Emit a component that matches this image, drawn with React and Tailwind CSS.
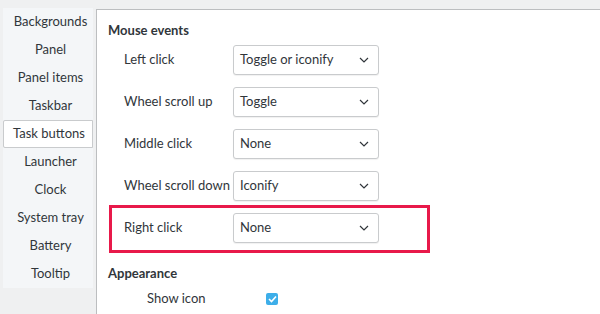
import React from "react";

const TABS = [
    "Backgrounds",
    "Panel",
    "Panel items",
    "Taskbar",
    "Task buttons",
    "Launcher",
    "Clock",
    "System tray",
    "Battery",
    "Tooltip",
];

const EVENTS = [
    { label: "Left click", value: "Toggle or iconify" },
    { label: "Wheel scroll up", value: "Toggle" },
    { label: "Middle click", value: "None" },
    { label: "Wheel scroll down", value: "Iconify" },
    { label: "Right click", value: "None" },
];

const Chevron = () => (
    <svg width="10" height="6" viewBox="0 0 10 6" fill="none">
        <path d="M1 1l4 4 4-4" stroke="#31363b" strokeWidth="1.2" />
    </svg>
);

// Desplegable estilo Breeze
const Select = ({ value }) => (
    <div className="w-[146px] h-[30px] flex items-center justify-between pl-[6px] pr-[9px] bg-white border border-[#c9cbcd] rounded-[3px] shadow-[0_1px_1px_rgba(0,0,0,0.06)]">
        <span>{value}</span>
        <Chevron />
    </div>
);

export default function App() {
    return (
        <div
            className="w-[600px] h-[314px] flex bg-[#eff0f1] overflow-hidden text-[13px] text-[#31363b]"
            style={{ fontFamily: "Lato, 'Noto Sans', sans-serif" }}
        >
            {/* Pestañas */}
            <div className="w-[93px] pt-[8px] pl-[3px] flex flex-col">
                {TABS.map((tab) => (
                    <div
                        key={tab}
                        className={
                            tab === "Task buttons"
                                ? "h-[28px] flex items-center justify-center pl-[2px] bg-white border border-[#c9cbcd] rounded-l-[2px]"
                                : "h-[28px] flex items-center justify-center pl-[5px] bg-[#f4f6f8]"
                        }
                    >
                        {tab}
                    </div>
                ))}
            </div>

            {/* Panel */}
            <div className="flex-1 mt-[9px] ml-[3px] bg-white border-l border-t border-[#bcbec0] pl-[11px] pt-[11px] relative">
                <div className="font-bold leading-[18px]">Mouse events</div>
                <div className="mt-[6px] pl-[16px] flex flex-col gap-[12px]">
                    {EVENTS.map((ev) => (
                        <div key={ev.label} className="flex items-center">
                            <div className="w-[109px]">{ev.label}</div>
                            <Select value={ev.value} />
                        </div>
                    ))}
                </div>
                <div className="absolute left-[12px] top-[195px] w-[321px] h-[48px] border-[3px] border-[#e8194a]" />

                <div className="mt-[21px] font-bold leading-[18px]">Appearance</div>
                <div className="mt-[7px] pl-[39px] flex items-center">
                    <div className="w-[119px]">Show icon</div>
                    <div className="w-[12px] h-[12px] rounded-[2px] bg-[#3daee9] flex items-center justify-center">
                        <svg width="9" height="8" viewBox="0 0 9 8" fill="none">
                            <path d="M1 4l2.5 2.5L8 1.5" stroke="white" strokeWidth="1.6" />
                        </svg>
                    </div>
                </div>
            </div>
        </div>
    );
}
